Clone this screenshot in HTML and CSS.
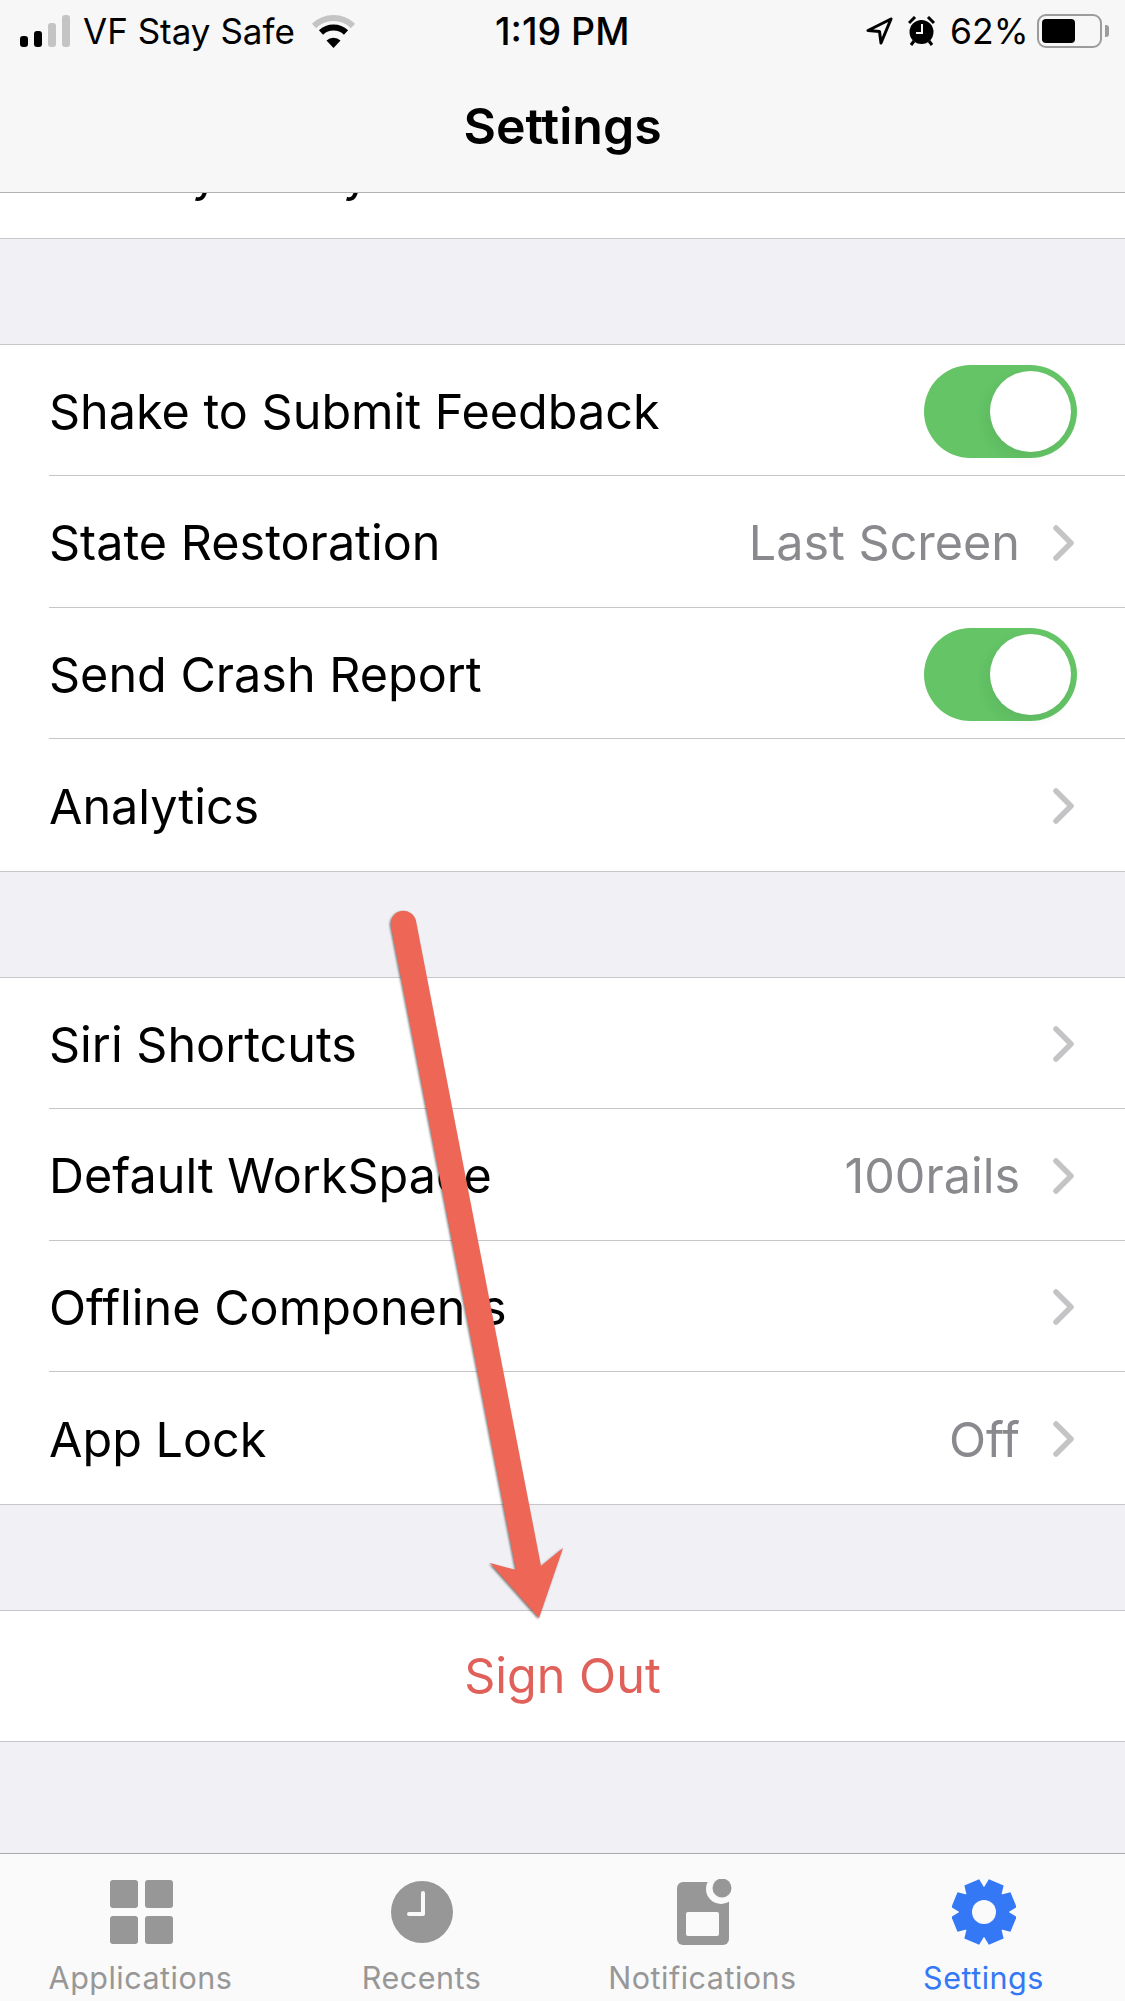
FILE: index.html
```html
<!DOCTYPE html>
<html lang="en">
<head>
  <meta charset="UTF-8">
  <meta name="viewport" content="width=device-width, initial-scale=1.0">
  <title>Settings</title>
  <link rel="stylesheet" href="styles.css">
</head>
<body>

<!-- Status bar and title -->
<header class="top-bar">
  <div class="status-bar">
    <div class="status-left">
      <div class="signal">
        <span class="bar bar-1"></span>
        <span class="bar bar-2"></span>
        <span class="bar bar-3"></span>
        <span class="bar bar-4"></span>
      </div>
      <span class="carrier">VF Stay Safe</span>
      <svg class="wifi" width="45" height="33" viewBox="0 0 45 33">
        <path d="M3 11 A28 28 0 0 1 42 11" fill="none" stroke="#c4c4c4" stroke-width="6"/>
        <path d="M10 17.5 A18 18 0 0 1 35 17.5" fill="none" stroke="#000" stroke-width="6"/>
        <path d="M15.5 25.5 A10 10 0 0 1 29.5 25.5 L22.5 33 Z" fill="#000"/>
      </svg>
    </div>
    <div class="clock">1:19 PM</div>
    <div class="status-right">
      <svg width="27" height="28" viewBox="0 0 27 28">
        <path d="M25 2 L2 13.5 L13.5 14.5 L15 26 Z" fill="none" stroke="#000" stroke-width="3" stroke-linejoin="round"/>
      </svg>
      <svg width="27" height="30" viewBox="0 0 27 30">
        <path d="M1 7 L7 1 M20 1 L26 7 M6 25 L3 29 M21 25 L24 29" stroke="#000" stroke-width="3"/>
        <circle cx="13.5" cy="16" r="12" fill="#000"/>
        <path d="M14 8 V17 H8" fill="none" stroke="#f7f7f7" stroke-width="2"/>
      </svg>
      <span class="percent">62%</span>
      <div class="battery">
        <div class="battery-body"><div class="battery-fill"></div></div>
        <div class="battery-nub"></div>
      </div>
    </div>
  </div>
  <h1 class="title">Settings</h1>
</header>

<main class="content">
  <section class="group group-clipped">
    <div class="row"><span>Privacy Policy</span></div>
  </section>

  <section class="group">
    <div class="row">
      <span>Shake to Submit Feedback</span>
      <div class="toggle"><div class="knob"></div></div>
    </div>
    <div class="row">
      <span>State Restoration</span>
      <div class="row-right">
        <span class="value">Last Screen</span>
        <svg class="chevron" width="24" height="36" viewBox="0 0 24 36"><path d="M3 3 L18 18 L3 33" /></svg>
      </div>
    </div>
    <div class="row">
      <span>Send Crash Report</span>
      <div class="toggle"><div class="knob"></div></div>
    </div>
    <div class="row">
      <span>Analytics</span>
      <div class="row-right">
        <svg class="chevron" width="24" height="36" viewBox="0 0 24 36"><path d="M3 3 L18 18 L3 33" /></svg>
      </div>
    </div>
  </section>

  <section class="group">
    <div class="row">
      <span>Siri Shortcuts</span>
      <div class="row-right">
        <svg class="chevron" width="24" height="36" viewBox="0 0 24 36"><path d="M3 3 L18 18 L3 33" /></svg>
      </div>
    </div>
    <div class="row">
      <span>Default WorkSpace</span>
      <div class="row-right">
        <span class="value">100rails</span>
        <svg class="chevron" width="24" height="36" viewBox="0 0 24 36"><path d="M3 3 L18 18 L3 33" /></svg>
      </div>
    </div>
    <div class="row">
      <span>Offline Components</span>
      <div class="row-right">
        <svg class="chevron" width="24" height="36" viewBox="0 0 24 36"><path d="M3 3 L18 18 L3 33" /></svg>
      </div>
    </div>
    <div class="row">
      <span>App Lock</span>
      <div class="row-right">
        <span class="value">Off</span>
        <svg class="chevron" width="24" height="36" viewBox="0 0 24 36"><path d="M3 3 L18 18 L3 33" /></svg>
      </div>
    </div>
  </section>

  <section class="group">
    <div class="sign-out">Sign Out</div>
  </section>
</main>

<!-- Tab bar -->
<nav class="tab-bar">
  <div class="tab">
    <svg width="64" height="66" viewBox="0 0 64 66">
      <rect x="1" y="1" width="28" height="28" rx="3" fill="#979797"/>
      <rect x="36" y="1" width="28" height="28" rx="3" fill="#979797"/>
      <rect x="1" y="37" width="28" height="28" rx="3" fill="#979797"/>
      <rect x="36" y="37" width="28" height="28" rx="3" fill="#979797"/>
    </svg>
    <span>Applications</span>
  </div>
  <div class="tab">
    <svg width="64" height="66" viewBox="0 0 64 66">
      <circle cx="32" cy="33" r="31" fill="#979797"/>
      <path d="M33 14 V35 H19" fill="none" stroke="#fafafa" stroke-width="4" stroke-linecap="round" stroke-linejoin="round"/>
    </svg>
    <span>Recents</span>
  </div>
  <div class="tab">
    <svg width="64" height="66" viewBox="0 0 64 66">
      <path d="M12 3 H58 V60 A6 6 0 0 1 52 66 H12 A6 6 0 0 1 6 60 V9 A6 6 0 0 1 12 3 Z" fill="#979797"/>
      <circle cx="50" cy="10" r="15" fill="#fafafa"/>
      <circle cx="51" cy="9" r="9.5" fill="#979797"/>
      <rect x="15" y="33" width="33" height="24" rx="2" fill="#fafafa"/>
    </svg>
    <span>Notifications</span>
  </div>
  <div class="tab tab-active">
    <svg width="64" height="66" viewBox="0 0 64 66">
      <g fill="#3478f6">
        <circle cx="32" cy="33" r="25"/>
        <polygon points="24,1 40,1 42,14 22,14" transform="rotate(22.5 32 33)"/>
        <polygon points="24,1 40,1 42,14 22,14" transform="rotate(67.5 32 33)"/>
        <polygon points="24,1 40,1 42,14 22,14" transform="rotate(112.5 32 33)"/>
        <polygon points="24,1 40,1 42,14 22,14" transform="rotate(157.5 32 33)"/>
        <polygon points="24,1 40,1 42,14 22,14" transform="rotate(202.5 32 33)"/>
        <polygon points="24,1 40,1 42,14 22,14" transform="rotate(247.5 32 33)"/>
        <polygon points="24,1 40,1 42,14 22,14" transform="rotate(292.5 32 33)"/>
        <polygon points="24,1 40,1 42,14 22,14" transform="rotate(337.5 32 33)"/>
      </g>
      <circle cx="32" cy="33" r="12" fill="#fafafa"/>
    </svg>
    <span>Settings</span>
  </div>
</nav>

<!-- Annotation arrow drawn over the screenshot -->
<svg class="arrow" width="1125" height="2001" viewBox="0 0 1125 2001">
  <path d="M391 926 A12.5 12.5 0 0 1 416 921 L541 1566 L563 1548 L539 1618 L490 1563 L516 1570 Z" fill="#ee6655"/>
</svg>

</body>
</html>
```

FILE: styles.css
```css
body {
  font-family: Inter, "Liberation Sans", sans-serif;
  background-color: #f0f0f5;
  color: #000;
  margin: 0;
  width: 1125px;
  height: 2001px;
  display: flex;
  flex-direction: column;
  overflow: hidden;
  position: relative;
}

.top-bar {
  height: 192px;
  flex-shrink: 0;
  background-color: #f7f7f7;
  border-bottom: 1px solid #b2b2b2;
}

.status-bar {
  display: flex;
  align-items: center;
  height: 62px;
  padding-left: 20px;
}

.status-left {
  display: flex;
  align-items: center;
  width: 475px;
}

.signal {
  display: flex;
  align-items: flex-end;
  gap: 6px;
  height: 32px;
  margin-top: -1px;
}

.bar {
  width: 8px;
  border-radius: 3px;
  background-color: #000;
}

.bar-1 { height: 11px; }
.bar-2 { height: 16px; }
.bar-3 { height: 24px; background-color: #c4c4c4; }
.bar-4 { height: 32px; background-color: #c4c4c4; }

.carrier {
  font-size: 35px;
  margin-left: 13px;
}

.wifi {
  margin-left: 16px;
}

.clock {
  font-size: 37.5px;
  font-weight: 500;
  width: 371px;
}

.status-right {
  display: flex;
  align-items: center;
  gap: 15px;
}

.percent {
  font-size: 35.5px;
}

.battery {
  display: flex;
  align-items: center;
  gap: 3px;
  margin-left: -7px;
}

.battery-body {
  width: 65px;
  height: 34px;
  box-sizing: border-box;
  border: 2.5px solid #9c9c9c;
  border-radius: 9px;
  padding: 3px;
}

.battery-fill {
  width: 33px;
  height: 100%;
  background-color: #000;
  border-radius: 4px;
}

.battery-nub {
  width: 4px;
  height: 12px;
  background-color: #9c9c9c;
  border-radius: 0 3px 3px 0;
}

.title {
  font-size: 50px;
  font-weight: 600;
  text-align: center;
  margin: 0;
  line-height: 128px;
}

.content {
  flex: 1;
  overflow: hidden;
}

.group {
  background-color: #fff;
  border-top: 1px solid #c6c6c8;
  border-bottom: 1px solid #c6c6c8;
  margin-top: 105px;
}

.group-clipped {
  border-top: none;
  margin-top: -87px;
}

.row {
  display: flex;
  align-items: center;
  justify-content: space-between;
  box-sizing: border-box;
  height: 131.5px;
  margin-left: 49px;
  padding-right: 48px;
  padding-top: 3px;
  border-bottom: 1px solid #c6c6c8;
  font-size: 48.5px;
}

.row:last-child {
  border-bottom: none;
}

.row-right {
  display: flex;
  align-items: center;
  gap: 33px;
}

.value {
  color: #8a8a8e;
}

.chevron path {
  fill: none;
  stroke: #c4c4c6;
  stroke-width: 5.5;
  stroke-linecap: round;
  stroke-linejoin: round;
}

.toggle {
  width: 153px;
  height: 93px;
  box-sizing: border-box;
  padding: 6px;
  border-radius: 47px;
  background-color: #64c466;
  display: flex;
  justify-content: flex-end;
}

.knob {
  width: 81px;
  height: 81px;
  border-radius: 50%;
  background-color: #fff;
  box-shadow: -4px 6px 14px rgba(0, 0, 0, 0.06);
}

.sign-out {
  height: 130px;
  display: flex;
  align-items: center;
  justify-content: center;
  font-size: 48.5px;
  color: #e0605a;
}

.tab-bar {
  height: 147px;
  flex-shrink: 0;
  background-color: #fafafa;
  border-top: 1px solid #a9a9ad;
  display: grid;
  grid-template-columns: repeat(4, 281px);
}

.tab {
  display: flex;
  flex-direction: column;
  align-items: center;
  padding-top: 25px;
  gap: 14px;
  font-size: 30.5px;
  letter-spacing: 0.5px;
  color: #979797;
}

.tab-active {
  color: #3478f6;
}

.arrow {
  position: absolute;
  left: 0;
  top: 0;
  pointer-events: none;
  filter: drop-shadow(-1px 1px 1px rgba(40, 40, 40, 0.6));
}
```
